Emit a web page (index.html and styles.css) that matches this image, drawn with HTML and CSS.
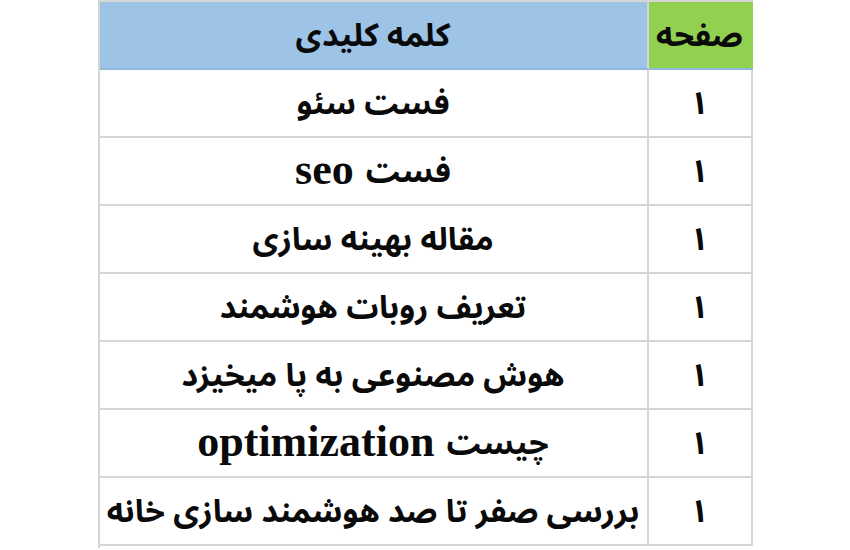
FILE: index.html
```html
<!DOCTYPE html>
<html lang="fa" dir="rtl">
<head>
<meta charset="utf-8">
<link rel="stylesheet" href="styles.css">
</head>
<body>
<div class="page">
  <div class="table">
    <div class="cell head-page">صفحه</div>
    <div class="cell head-key">کلمه کلیدی</div>

    <div class="cell num">۱</div>
    <div class="cell key">فست سئو</div>

    <div class="cell num">۱</div>
    <div class="cell key">فست <span class="lat">seo</span></div>

    <div class="cell num">۱</div>
    <div class="cell key">مقاله بهینه سازی</div>

    <div class="cell num">۱</div>
    <div class="cell key">تعریف روبات هوشمند</div>

    <div class="cell num">۱</div>
    <div class="cell key">هوش مصنوعی به پا میخیزد</div>

    <div class="cell num">۱</div>
    <div class="cell key">چیست <span class="lat">optimization</span></div>

    <div class="cell num">۱</div>
    <div class="cell key">بررسی صفر تا صد هوشمند سازی خانه</div>
  </div>
</div>
</body>
</html>
```

FILE: styles.css
```css
html, body {
  margin: 0;
  padding: 0;
  background: #ffffff;
}

.page {
  width: 850px;
  height: 550px;
  display: flex;
  justify-content: center;
  box-sizing: border-box;
}

.table {
  width: 655px;
  height: 548px;
  display: grid;
  grid-template-columns: 104px 1fr;
  grid-auto-rows: 68px;
  border-top: 2px solid #d6d6d6;
  border-left: 2px solid #d6d6d6;
  box-sizing: border-box;
  font-family: "Noto Sans Arabic", "DejaVu Sans", sans-serif;
  font-weight: bold;
  color: #0a0a0a;
}

.cell {
  display: flex;
  align-items: center;
  justify-content: center;
  border-right: 2px solid #d6d6d6;
  border-bottom: 2px solid #d6d6d6;
  box-sizing: border-box;
  font-size: 32px;
  white-space: nowrap;
  overflow: hidden;
  padding-top: 2px;
}

.head-page {
  background: #92d050;
  border-right-color: #92d050;
  border-bottom-color: #8fb8dc;
}

.head-key {
  background: #9dc3e6;
  border-bottom-color: #8fb8dc;
}

.lat {
  font-family: "Liberation Serif", serif;
  font-size: 44px;
  font-weight: bold;
  margin-right: 12px;
  position: relative;
  top: -3px;
}
```
